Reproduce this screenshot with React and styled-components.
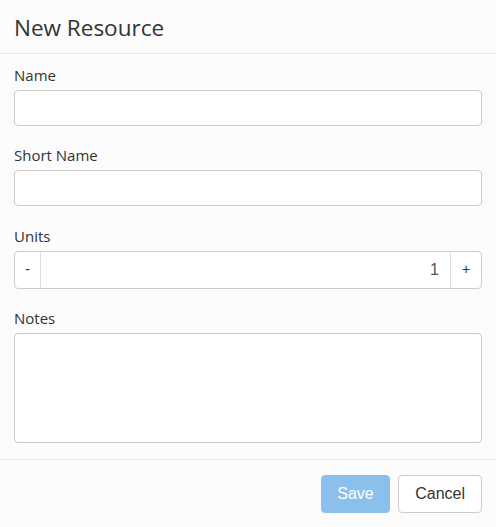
import React from 'react';
import styled, { createGlobalStyle } from 'styled-components';

const GlobalStyle = createGlobalStyle`
  html, body {
    margin: 0;
    padding: 0;
    background: #fcfcfc;
  }
  body {
    font-family: "Open Sans", "Noto Sans", sans-serif;
    color: #333;
  }
`;

const Dialog = styled.div`
  width: 496px;
  height: 527px;
  background: #fcfcfc;
  display: flex;
  flex-direction: column;
  box-sizing: border-box;
`;

const Header = styled.div`
  height: 54px;
  box-sizing: border-box;
  border-bottom: 1px solid #e9e9e9;
  padding: 0 14px;
  display: flex;
  align-items: center;
`;

const Title = styled.h1`
  margin: 0;
  font-size: 22.5px;
  font-weight: 400;
  color: #333;
  padding-top: 2px;
`;

const Body = styled.div`
  padding: 10px 14px 0;
  height: 406px;
  box-sizing: border-box;
  border-bottom: 1px solid #e9e9e9;
`;

const Field = styled.div`
  display: flex;
  flex-direction: column;
  margin-bottom: ${p => p.$gap || 18}px;
`;

const Label = styled.label`
  font-size: 15px;
  line-height: 23px;
  height: 26px;
  color: #333;
`;

const Input = styled.input`
  box-sizing: border-box;
  height: 36px;
  width: 100%;
  border: 1px solid #ccc;
  border-radius: 4px;
  background: #fff;
  padding: 6px 10px;
  font-size: 15px;
`;

const TextArea = styled.textarea`
  box-sizing: border-box;
  height: 110px;
  width: 100%;
  border: 1px solid #ccc;
  border-radius: 4px;
  background: #fff;
  resize: none;
`;

const Spinner = styled.div`
  display: flex;
  height: 38px;
  box-sizing: border-box;
  border: 1px solid #ccc;
  border-radius: 4px;
  background: #fff;
  overflow: hidden;
`;

const SpinButton = styled.div`
  width: ${p => p.$w}px;
  display: flex;
  align-items: center;
  justify-content: center;
  font-family: "Liberation Sans", Arial, sans-serif;
  font-size: 14px;
  color: #333;
  ${p => (p.$side === 'left' ? 'border-right' : 'border-left')}: 1px solid #ddd;
  padding-bottom: 2px;
  box-sizing: border-box;
`;

const SpinValue = styled.div`
  flex: 1;
  display: flex;
  align-items: center;
  justify-content: flex-end;
  padding-right: 11px;
  font-family: "Liberation Sans", Arial, sans-serif;
  font-size: 16px;
  color: #555;
`;

const Footer = styled.div`
  display: flex;
  justify-content: flex-end;
  gap: 8px;
  padding: 15px 14px 0;
`;

const Button = styled.button`
  height: 38px;
  box-sizing: border-box;
  padding: 0 ${p => p.$pad}px;
  font-family: "Liberation Sans", Arial, sans-serif;
  font-size: 16px;
  border-radius: 4px;
  border: 1px solid ${p => (p.$primary ? '#8bbfec' : '#ccc')};
  background: ${p => (p.$primary ? '#8bbfec' : '#fff')};
  color: ${p => (p.$primary ? '#fff' : '#333')};
`;

export default function App() {
  return (
    <>
      <GlobalStyle />
      <Dialog>
        <Header>
          <Title>New Resource</Title>
        </Header>
        <Body>
          <Field $gap={18}>
            <Label>Name</Label>
            <Input type="text" />
          </Field>
          <Field $gap={19}>
            <Label>Short Name</Label>
            <Input type="text" />
          </Field>
          <Field $gap={18}>
            <Label>Units</Label>
            <Spinner>
              <SpinButton $w={26} $side="left">-</SpinButton>
              <SpinValue>1</SpinValue>
              <SpinButton $w={31} $side="right">+</SpinButton>
            </Spinner>
          </Field>
          <Field $gap={0}>
            <Label>Notes</Label>
            <TextArea />
          </Field>
        </Body>
        <Footer>
          <Button $primary $pad={15.5}>Save</Button>
          <Button $pad={16}>Cancel</Button>
        </Footer>
      </Dialog>
    </>
  );
}
